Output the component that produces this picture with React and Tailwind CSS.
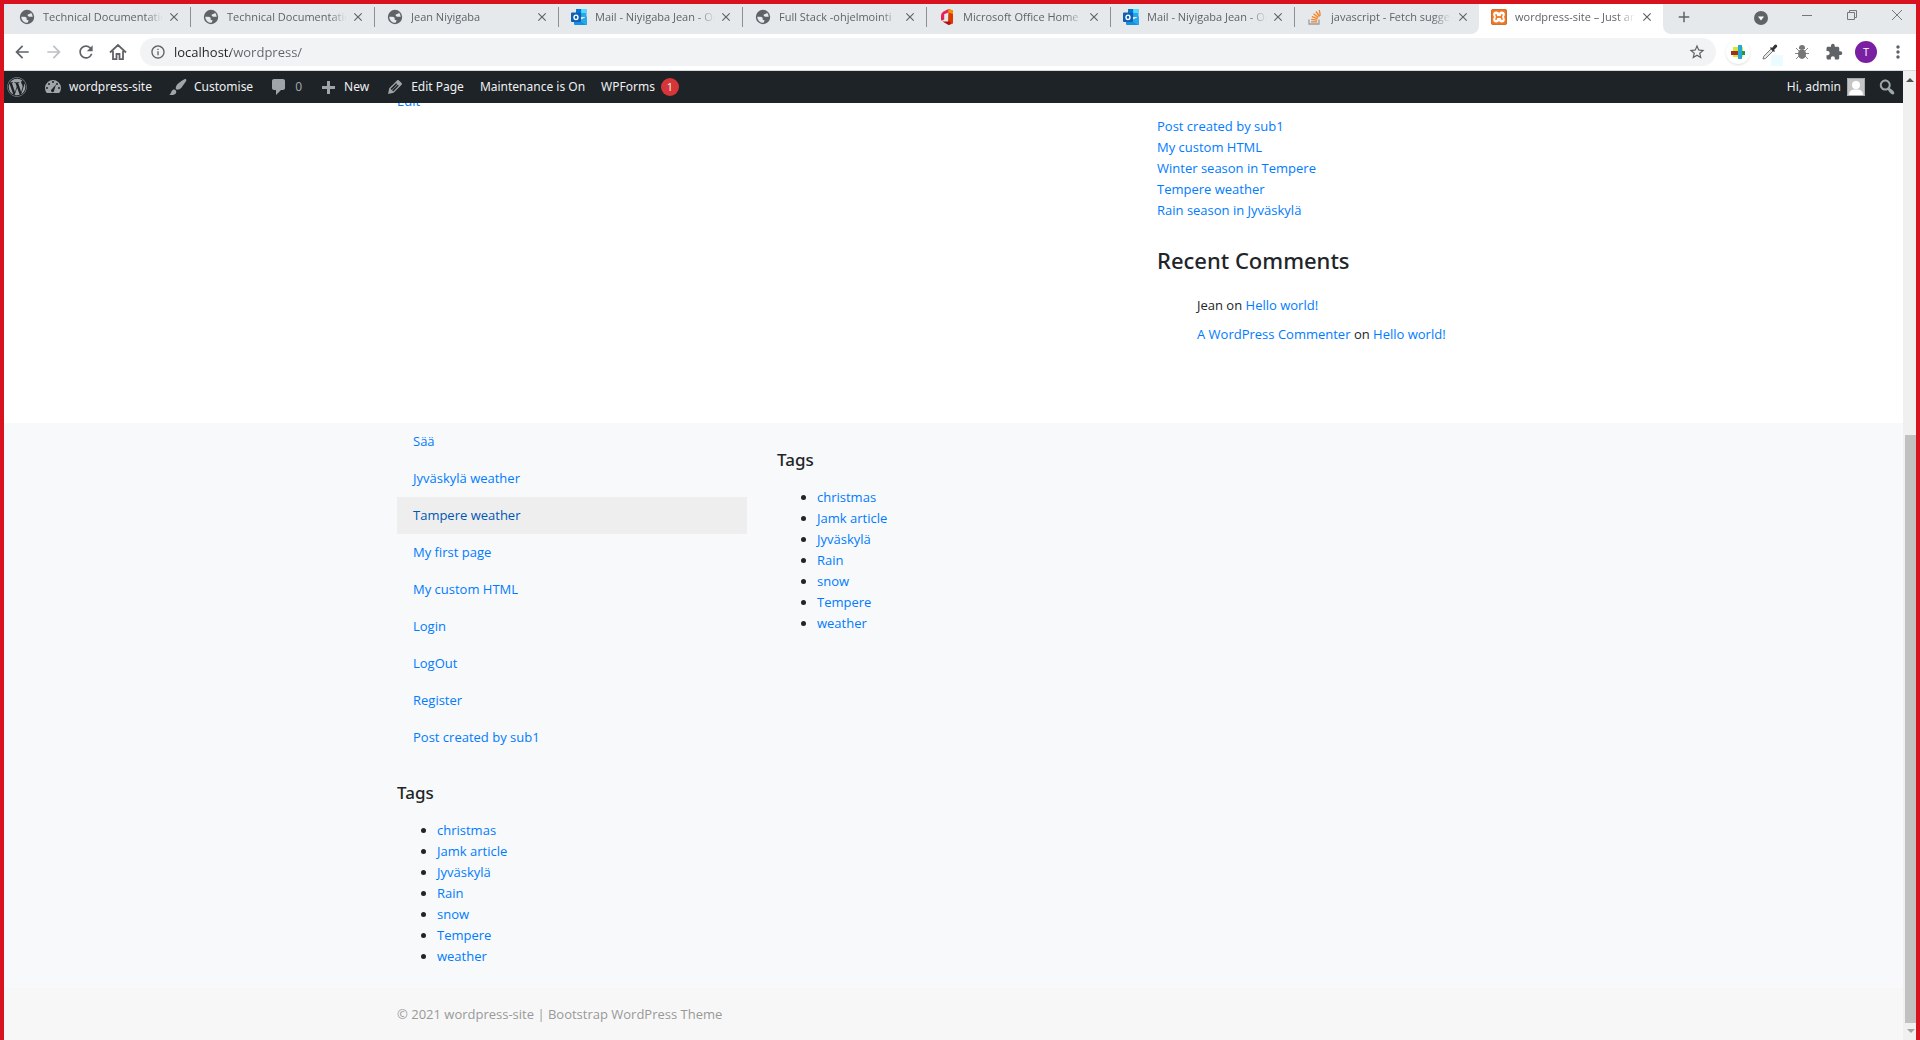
import React from 'react';
import { FaWordpress } from 'react-icons/fa';
import { MdArrowBack, MdArrowForward, MdRefresh, MdClose, MdStarBorder, MdExtension, MdMoreVert, MdAdd, MdInfoOutline } from 'react-icons/md';

const tabs = [
  ['globe', 'Technical Documentation'],
  ['globe', 'Technical Documentation'],
  ['globe', 'Jean Niyigaba'],
  ['outlook', 'Mail - Niyigaba Jean - Outlook'],
  ['globe', 'Full Stack -ohjelmointi'],
  ['office', 'Microsoft Office Home'],
  ['outlook', 'Mail - Niyigaba Jean - Outlook'],
  ['stack', 'javascript - Fetch suggestions'],
  ['xampp', 'wordpress-site – Just another'],
];

function Globe() {
  return (
    <svg viewBox="0 0 16 16" className="size-4">
      <circle cx="8" cy="8" r="7.200" fill="#5f6368" />
      <path d="M2.200 7.800h3.300q2.300.1 2.300 2v1.300h1.600q0 1.500-.8 2.700a6 6 0 0 1-6.400-6z" fill="#e6e9ec" />
      <path d="M7.600 2.200q2.600-.3 4.300 1.400-.3 1.500-1.800 1.500-1.700.1-1.500 1.500.3 1 1.700 1.100 2 .2 3.400.1-.2-2.500-1.800-4.200-1.800-1.700-4.300-1.400z" fill="#e6e9ec" />
    </svg>
  );
}

function Outlook() {
  return (
    <svg viewBox="0 0 16 16" className="size-4">
      <path d="M5 0h10.500v8H5z" fill="#28a8ea" />
      <path d="M5 0h5.200v4H5z" fill="#0078d4" />
      <path d="M10.200 0h5.300v4h-5.300z" fill="#50d9ff" />
      <path d="M5 4h5.200v4H5z" fill="#0364b8" />
      <path d="M3 7.500l6.500 4L16 7.500V15a1 1 0 0 1-1 1H4a1 1 0 0 1-1-1z" fill="#1490df" />
      <path d="M16 7.500V15a1 1 0 0 1-1 1L8 11.500z" fill="#28a8ea" />
      <rect y="3.500" width="10" height="9.500" rx=".8" fill="#0f5fb5" />
      <ellipse cx="5" cy="8.300" rx="2" ry="2.200" fill="none" stroke="#fff" strokeWidth="1.400" />
    </svg>
  );
}

function Office() {
  return (
    <svg viewBox="0 0 16 16" className="size-4">
      <path d="M9.500 0L4.500 2.500Q2 4 2 6.500v4q0 1.300 1.200 1l2-1V5.200L9.500 3.500z" fill="#e8205a" />
      <path d="M9.500 0L14 1.500v13L9.500 16l-.5-3z" fill="#d83b01" />
      <path d="M9.500 0L14 1.500V5L9.500 3.500z" fill="#f59000" />
      <path d="M3.500 12.500L9.500 16l2-.8V12.500z" fill="#b30c1a" />
    </svg>
  );
}

function Stack() {
  return (
    <svg viewBox="0 0 16 16" className="size-4" fill="none" strokeWidth="1.300">
      <path d="M2 10.500v4.500h10v-4.500" stroke="#9a9c9f" />
      <path d="M4 12.800h6.200M4.200 10.400l6 .8M4.900 7.700l5.700 2M6.500 4.800l4.900 3.700M9 2.500l3.600 5M12.300 1l1 5.700" stroke="#f48024" />
    </svg>
  );
}

function Xampp() {
  return (
    <svg viewBox="0 0 16 16" className="size-4">
      <rect x=".4" y=".4" width="15.200" height="15.200" rx="1.500" fill="#f37623" stroke="#b85a1c" strokeWidth=".8" />
      <g fill="#fff"><circle cx="5.200" cy="5.600" r="3" /><circle cx="10.800" cy="5.600" r="3" /><circle cx="5.200" cy="10.400" r="3" /><circle cx="10.800" cy="10.400" r="3" /></g>
      <path d="M5 5.600q0 2.400 2 2.400h2q2 0 2-2.400M5 10.400Q5 8 7 8h2q2 0 2 2.400" fill="none" stroke="#f37623" strokeWidth="1.400" strokeLinecap="round" />
      <path d="M7.200 5h1.600v1.300H7.200zM7.200 9.700h1.600V11H7.200z" fill="#fff" />
    </svg>
  );
}

function Favicon({ kind }) {
  if (kind === 'outlook') return <Outlook />;
  if (kind === 'office') return <Office />;
  if (kind === 'stack') return <Stack />;
  if (kind === 'xampp') return <Xampp />;
  return <Globe />;
}

function Tab({ kind, title, active, last }) {
  return (
    <div className={active ? 'flex w-46 items-center bg-white pb-1 pl-3 pr-2' : 'flex w-46 items-center pb-1'}>
      <div className={active || last ? 'flex h-5 min-w-0 flex-1 items-center' : 'flex h-5 min-w-0 flex-1 items-center border-r border-[#8b8e92]'}>
        <a href="#tab" className={active ? 'flex min-w-0 flex-1 items-center gap-2' : 'flex min-w-0 flex-1 items-center gap-2 pl-3'}>
          <span className="shrink-0"><Favicon kind={kind} /></span>
          <span className="w-30 overflow-hidden whitespace-nowrap mask-r-from-85% text-[11px] leading-4 text-[#5f6368]">{title}</span>
        </a>
        <button aria-label="Close tab" className={active ? 'flex size-4 items-center justify-center' : 'mr-2 flex size-4 items-center justify-center'}>
          <MdClose className="size-3.5 text-[#5f6368]" />
        </button>
      </div>
    </div>
  );
}

function TabStrip() {
  return (
    <div className="flex h-[30px] shrink-0 overflow-hidden bg-white">
      <div className="flex shrink-0 rounded-br-lg bg-[#e6e9ec] pl-[3px]">
        {tabs.slice(0, 8).map(([k, t], i) => <Tab key={i} kind={k} title={t} last={i === 7} />)}
      </div>
      <Tab kind={tabs[8][0]} title={tabs[8][1]} active />
      <div className="flex flex-1 items-center rounded-bl-lg bg-[#e6e9ec] pb-1 pl-3 pr-[13px] text-[#5f6368]">
        <button aria-label="New tab"><MdAdd className="size-[18px]" /></button>
        <div className="ml-auto flex w-[149px] items-start justify-between">
          <button aria-label="Search tabs" className="pt-0.5">
            <svg viewBox="0 0 14 14" className="size-3.5"><circle cx="7" cy="7" r="7" fill="#5f6368" /><path d="M4 5.500h6L7 9.500z" fill="#fff" /></svg>
          </button>
          <button aria-label="Minimise"><svg viewBox="0 0 12 12" className="size-3" stroke="#777" fill="none"><path d="M1 6.500h10" /></svg></button>
          <button aria-label="Restore"><svg viewBox="0 0 12 12" className="size-3" stroke="#777" fill="none"><path d="M1.500 3.500h7v7h-7zM3.500 3.500v-2h7v7h-2" /></svg></button>
          <button aria-label="Close window"><svg viewBox="0 0 12 12" className="size-3" stroke="#777" fill="none"><path d="M1 1l10 10M11 1L1 11" /></svg></button>
        </div>
      </div>
    </div>
  );
}

function Toolbar() {
  return (
    <div className="flex h-[37px] shrink-0 items-center border-b border-[#d5d8dc] bg-white pl-2 pr-1.5 text-[#5f6368]">
      <div className="flex gap-3">
        <button aria-label="Back"><MdArrowBack className="size-5" /></button>
        <button aria-label="Forward"><MdArrowForward className="size-5 text-[#bdc0c4]" /></button>
        <button aria-label="Reload"><MdRefresh className="size-5" /></button>
        <button aria-label="Home">
          <svg viewBox="0 0 20 20" className="size-5" fill="none" stroke="#5f6368" strokeWidth="1.800"><path d="M2 10.500L10 3l8 7.500M5 9v8.200h3.500V12h3v5.200H15V9" /></svg>
        </button>
      </div>
      <div className="ml-3 flex h-7 flex-1 items-center gap-2 rounded-full bg-[#f1f3f4] px-2.5">
        <MdInfoOutline className="size-4" />
        <input
          aria-label="Address"
          className="min-w-0 flex-1 bg-linear-to-r from-[#202124] from-[57px] to-[#5f6368] to-[57px] bg-clip-text text-[13px] leading-5 text-transparent caret-black outline-none"
          defaultValue="localhost/wordpress/"
        />
        <button aria-label="Bookmark"><MdStarBorder className="size-[18px]" /></button>
      </div>
      <div className="ml-2.5 flex items-center gap-2">
        <button aria-label="Extension" className="flex size-6 items-center justify-center rounded-full bg-white shadow">
          <svg viewBox="0 0 16 16" className="size-4"><path d="M3 3h10v10H3z" fill="#c9ee2c" /><path d="M1 7h14v4H1z" fill="#a52a2a" /><path d="M12 7h3v4h-3z" fill="#1a9c50" /><path d="M8 1h4v14H8z" fill="#29a5d8" /></svg>
        </button>
        <button aria-label="Colour picker" className="flex size-6 items-center justify-center">
          <svg viewBox="0 0 16 16" className="size-4 overflow-visible"><path d="M9 11h12v11H9z" fill="#eafcff" /><path d="M9 5l2 2-7.500 7.500L1 15l.7-2.600z" fill="#e6e6e6" stroke="#777" /><path d="M8 4l1-1 1 1 2.500-3q1-1 2.200 0t0 2.200L12 6l1 1-1 1z" fill="#333" /></svg>
        </button>
        <button aria-label="Bug" className="flex size-6 items-center justify-center">
          <svg viewBox="0 0 16 16" className="size-4"><path d="M2 4l3 3M14 4l-3 3M1 9.500h14M2 15l3-3M14 15l-3-3" stroke="#888" fill="none" /><ellipse cx="8" cy="10" rx="4" ry="5" fill="#777" /><path d="M5 4a3 3 0 0 1 6 0v1H5z" fill="#777" /></svg>
        </button>
        <button aria-label="Extensions" className="flex size-6 items-center justify-center"><MdExtension className="size-[18px]" /></button>
        <button className="mx-px flex size-[22px] items-center justify-center rounded-full bg-[#7b1fa2] text-[11px] text-white">T</button>
        <button aria-label="Menu" className="flex size-6 items-center justify-center"><MdMoreVert className="size-5" /></button>
      </div>
    </div>
  );
}

function Gauge() {
  return (
    <svg viewBox="0 0 20 20" className="size-5" fill="#a0a5aa">
      <path d="M3.760 16h12.480A8 8 0 1 0 3.760 16zM10 4a1 1 0 1 1 0 2 1 1 0 0 1 0-2zM6 6a1 1 0 1 1 0 2 1 1 0 0 1 0-2zm8 0a1 1 0 1 1 0 2 1 1 0 0 1 0-2zm-5.430 6.610L13 7.500l-1.930 6.200A1.450 1.450 0 1 1 8.570 12.610zM4 10a1 1 0 1 1 0 2 1 1 0 0 1 0-2zm12 0a1 1 0 1 1 0 2 1 1 0 0 1 0-2z" />
    </svg>
  );
}

function BarIcon({ d }) {
  return <svg viewBox="0 0 20 20" className="size-5" fill="#a0a5aa"><path d={d} /></svg>;
}

const brush = 'M18.330 3.570s.27-.8-.31-1.360c-.53-.52-1.220-.24-1.220-.24-.61.3-5.760 3.470-7.670 5.570-.86.96-2.060 3.790-1.090 4.820.92.98 3.960-.17 4.790-1 2.060-2.060 5.210-7.170 5.500-7.790zM1.400 17.650c2.370-1.560 1.460-3.410 3.230-4.640.93-.65 2.220-.62 3.080.29.63.67.8 2.570-.16 3.460-1.570 1.450-4 1.550-6.150.89z';
const comment = 'M5 2h9c1.100 0 2 .9 2 2v7c0 1.100-.9 2-2 2h-2l-5 5v-5H5c-1.100 0-2-.9-2-2V4c0-1.100.9-2 2-2z';
const plus = 'M17 9v3h-5v5H9v-5H4V9h5V4h3v5h5z';
const pencil = 'M13.890 3.390l2.710 2.720c.46.46.42 1.240.03 1.640l-8.010 8.020-5.560 1.160 1.160-5.580s7.600-7.630 7.990-8.030c.39-.39 1.220-.39 1.680.07zm-2.730 2.790l-5.590 5.610 1.110 1.110 5.540-5.650zm-2.970 8.230l5.580-5.600-1.070-1.080-5.590 5.600z';
const search = 'M12.140 4.180c1.870 1.870 2.110 4.750.72 6.890.12.100.22.210.36.310.2.160.47.360.81.590.34.240.56.390.66.470.42.310.73.570.94.780.32.320.6.650.84 1 .25.350.44.690.59 1.040.14.350.21.680.18 1-.02.320-.14.590-.36.810s-.49.340-.81.360c-.31.020-.65-.04-.99-.19-.35-.14-.7-.34-1.040-.59-.35-.24-.68-.52-1-.84-.21-.21-.47-.52-.77-.93-.1-.13-.25-.35-.47-.66-.22-.32-.4-.57-.56-.78-.16-.2-.29-.35-.44-.5-2.070 1.090-4.690.76-6.440-.98-2.140-2.150-2.140-5.640 0-7.780 2.150-2.150 5.630-2.150 7.780 0zm-1.410 6.360c1.360-1.370 1.360-3.580 0-4.950-1.370-1.370-3.590-1.370-4.950 0-1.370 1.370-1.370 3.580 0 4.950 1.360 1.370 3.580 1.370 4.950 0z';

function AdminBar() {
  return (
    <nav aria-label="Toolbar" className="flex h-8 shrink-0 items-center bg-[#1d2327] pl-[3px] pr-1.5 font-['Noto_Sans',sans-serif] text-[12px] leading-5 text-[#f0f0f1]">
      <a href="#wp" aria-label="WordPress"><FaWordpress className="size-5 text-[#a0a5aa]" /></a>
      <a href="#site" className="ml-4 flex items-center gap-1.5"><Gauge />wordpress-site</a>
      <a href="#customise" className="ml-4 flex items-center gap-1.5"><BarIcon d={brush} />Customise</a>
      <a href="#comments" className="ml-4 flex items-center gap-1.5 text-[#a0a5aa]"><BarIcon d={comment} />0</a>
      <a href="#new" className="ml-4 flex items-center gap-1.5"><BarIcon d={plus} />New</a>
      <a href="#edit-page" className="ml-4 flex items-center gap-1.5"><BarIcon d={pencil} />Edit Page</a>
      <a href="#maintenance" className="ml-4">Maintenance is On</a>
      <a href="#wpforms" className="ml-4 flex items-center gap-1.5">WPForms<span className="flex size-[18px] items-center justify-center rounded-full bg-[#d63638] text-[11px]">1</span></a>
      <a href="#profile" className="ml-auto flex items-center gap-1.5">Hi, admin
        <svg viewBox="0 0 18 18" className="size-[18px]"><path d="M0 0h18v18H0z" fill="#c5c5c5" /><circle cx="9" cy="7" r="4" fill="#fff" /><path d="M2 17q0-5 5-5.500h4q5 .5 5 5.500z" fill="#fff" /><path d="M.5.500h17v17H.5z" fill="none" stroke="#a5a8ab" /></svg>
      </a>
      <button aria-label="Search" className="ml-3"><BarIcon d={search} /></button>
    </nav>
  );
}

function Link({ children }) {
  return <a href="#link" className="text-[#007bff]">{children}</a>;
}

function Tags() {
  return (
    <section className="mt-[26px]">
      <h5 className="font-['Noto_Sans',sans-serif] text-[17px] font-medium leading-[21px]">Tags</h5>
      <ul className="mt-[17px] list-disc pl-10">
        {['christmas', 'Jamk article', 'Jyväskylä', 'Rain', 'snow', 'Tempere', 'weather'].map((t) => <li key={t}><Link>{t}</Link></li>)}
      </ul>
    </section>
  );
}

const menu = ['Sää', 'Jyväskylä weather', 'Tampere weather', 'My first page', 'My custom HTML', 'Login', 'LogOut', 'Register', 'Post created by sub1'];
const posts = ['Post created by sub1', 'My custom HTML', 'Winter season in Tempere', 'Tempere weather', 'Rain season in Jyväskylä'];

function Page() {
  return (
    <div className="flex min-w-0 flex-1 flex-col justify-end overflow-hidden text-[13px] leading-[21px] text-[#212529]">
      <main className="shrink-0 pr-[3px]">
        <div className="mx-auto grid w-full max-w-[1140px] grid-cols-3">
          <div className="col-span-2 px-[15px]"><Link>Edit</Link></div>
          <aside className="px-[15px] pb-[78px] pt-[25px]">
            <ul>{posts.map((p) => <li key={p}><Link>{p}</Link></li>)}</ul>
            <h3 className="mt-[25px] font-['Noto_Sans',sans-serif] text-[22px] font-medium leading-[29px]">Recent Comments</h3>
            <ul className="mt-5 flex flex-col gap-2 pl-10">
              <li>Jean on <Link>Hello world!</Link></li>
              <li><Link>A WordPress Commenter</Link> on <Link>Hello world!</Link></li>
            </ul>
          </aside>
        </div>
      </main>
      <section className="shrink-0 bg-[#f8f9fa] pr-[3px]">
        <div className="mx-auto grid w-full max-w-[1140px] grid-cols-3 pb-[21px]">
          <div className="px-[15px]">
            <ul>
              {menu.map((m, i) => (
                <li key={m}><a href="#menu" className={i === 2 ? 'block bg-[#eeeeee] px-4 py-2 text-[#0056b3]' : 'block px-4 py-2 text-[#007bff]'}>{m}</a></li>
              ))}
            </ul>
            <Tags />
          </div>
          <div className="px-[15px]"><Tags /></div>
        </div>
      </section>
      <footer className="shrink-0 bg-[#f7f7f7] pb-[15px] pr-[3px] pt-4 text-[#999]">
        <div className="mx-auto w-full max-w-[1140px] px-[15px]">© 2021 wordpress-site | Bootstrap WordPress Theme</div>
      </footer>
    </div>
  );
}

export default function App() {
  return (
    <div className="flex h-screen flex-col overflow-hidden border-x-4 border-t-4 border-[#d9121f] bg-white font-['Open_Sans',sans-serif]">
      <TabStrip />
      <Toolbar />
      <div className="flex min-h-0 flex-1">
        <div className="flex min-w-0 flex-1 flex-col">
          <AdminBar />
          <Page />
        </div>
        <div aria-hidden="true" className="flex w-[13px] shrink-0 flex-col items-end bg-[#f0f0f0]">
          <svg viewBox="0 0 11 17" className="h-[17px] w-[11px]"><path d="M1 11l4-4 4 4z" fill="#505050" /></svg>
          <div className="flex-[347]" />
          <div className="w-[11px] flex-[588] bg-[#c1c1c1]" />
          <svg viewBox="0 0 11 17" className="h-[17px] w-[11px]"><path d="M2 6l4 4 4-4z" fill="#a3a3a3" /></svg>
        </div>
      </div>
    </div>
  );
}
